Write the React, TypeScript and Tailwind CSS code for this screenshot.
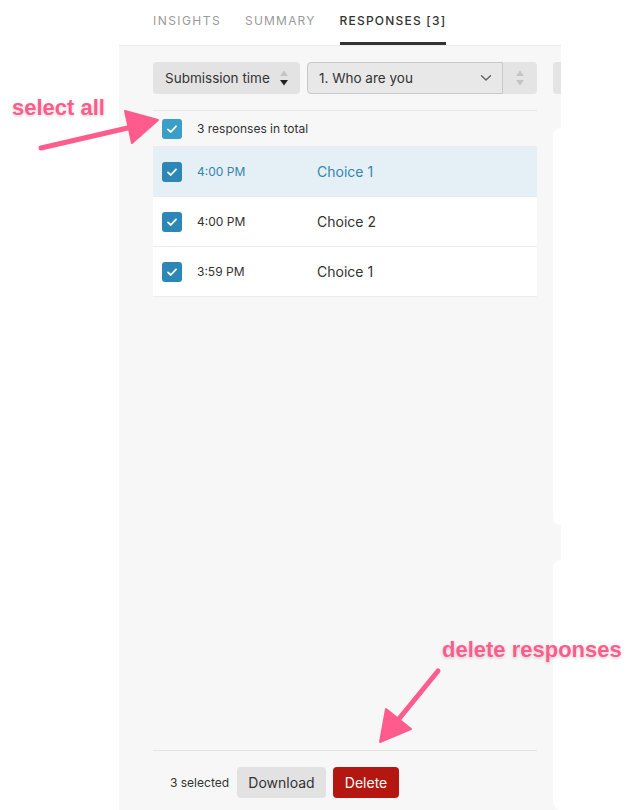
import React from 'react';

const rows = [
  { time: '4:00 PM', choice: 'Choice 1', active: true },
  { time: '4:00 PM', choice: 'Choice 2', active: false },
  { time: '3:59 PM', choice: 'Choice 1', active: false },
];

const Check = ({ light }: { light?: boolean }) => (
  <div className={`w-5 h-5 rounded-[3px] flex items-center justify-center shrink-0 ${light ? 'bg-[#3a9ec6]' : 'bg-[#2c87b6]'}`}>
    <svg width="14" height="14" viewBox="0 0 14 14" fill="none">
      <polyline points="3,7.4 5.8,10 11,4.3" stroke="white" strokeWidth="1.8" strokeLinecap="round" strokeLinejoin="round" />
    </svg>
  </div>
);

const SortArrows = ({ dark }: { dark?: boolean }) => (
  <svg width="10" height="18" viewBox="0 0 10 18">
    <polygon points="5,1.5 9,7 1,7" fill="#c4c4c4" />
    <polygon points="1,11 9,11 5,16.5" fill={dark ? '#222' : '#c4c4c4'} />
  </svg>
);

export default function App() {
  return (
    <div className="relative w-[634px] h-[810px] bg-white overflow-hidden font-['Inter',sans-serif] text-[#333]">
      {/* tabs */}
      <div className="h-[45px] pl-[153px] flex items-end gap-[24px] text-[12px] tracking-[0.1em]">
        <div className="pb-[15px] text-[#9a9a9a] tracking-[0.12em]">INSIGHTS</div>
        <div className="pb-[15px] text-[#9a9a9a]">SUMMARY</div>
        <div className="pb-[12px] border-b-[3px] border-[#333] text-[#333] font-medium">RESPONSES [3]</div>
      </div>

      {/* panel */}
      <div className="ml-[119px] w-[442px] h-[765px] bg-[#f7f7f7] border-t border-[#ececec] pl-[34px] pt-[16px] flex gap-4 overflow-hidden">
        {/* list column */}
        <div className="w-[384px] shrink-0 flex flex-col">
          <div className="h-8 flex gap-[7px]">
            <div className="w-[147px] rounded-[4px] bg-[#e3e3e3] flex items-center justify-between pl-3 pr-[11px] text-[13.5px]">
              <span>Submission time</span>
              <SortArrows dark />
            </div>
            <div className="flex">
              <div className="w-[196px] rounded-l-[4px] bg-[#e8e8e8] border border-[#c8c8c8] flex items-center justify-between pl-[11px] pr-[10px] text-[13.5px]">
                <span>1. Who are you</span>
                <svg width="12" height="8" viewBox="0 0 12 8" fill="none">
                  <polyline points="1.5,1.8 6,6 10.5,1.8" stroke="#666" strokeWidth="1.5" strokeLinecap="round" strokeLinejoin="round" />
                </svg>
              </div>
              <div className="w-[34px] rounded-r-[4px] bg-[#e4e4e4] flex items-center justify-center">
                <SortArrows />
              </div>
            </div>
          </div>

          <div className="mt-4 border-t border-[#e6e6e6]">
            <div className="h-[36px] flex items-center pl-[9px] gap-[15px] text-[12px] border-b border-[#ececec]">
              <Check light />
              <span>3 responses in total</span>
            </div>
            {rows.map((r, i) => (
              <div
                key={i}
                className={`h-[50px] flex items-center pl-[9px] border-b border-[#ececec] ${r.active ? 'bg-[#e5f0f6] text-[#3585ad]' : 'bg-white text-[#333]'}`}
              >
                <Check />
                <span className="ml-[15px] w-[120px] text-[12px]">{r.time}</span>
                <span className="text-[14px]">{r.choice}</span>
              </div>
            ))}
          </div>

          <div className="mt-auto mb-[12px] border-t border-[#e4e4e4] pt-[16px] pl-[17px] flex items-center gap-[7px]">
            <span className="text-[12px] mr-[1px]">3 selected</span>
            <button className="w-[89px] h-[31px] rounded-[4px] bg-[#e2e2e2] text-[14px] text-[#333]">Download</button>
            <button className="w-[66px] h-[31px] rounded-[4px] bg-[#b3170f] text-[14px] text-white">Delete</button>
          </div>
        </div>

        {/* right column (cut off) */}
        <div className="w-[100px] shrink-0 flex flex-col">
          <div className="h-8 rounded-[4px] bg-[#e4e4e4]" />
          <div className="mt-[34px] h-[397px] rounded-[8px] bg-white" />
          <div className="mt-[35px] flex-1 rounded-[8px] bg-white" />
        </div>
      </div>

      {/* annotations */}
      <div className="absolute left-[12px] top-[91px] text-[22px] font-bold text-[#ff5b8c] font-['Liberation_Sans',sans-serif] [text-shadow:0_0_2px_#fff,0_1px_3px_rgba(0,0,0,0.25)]">
        select all
      </div>
      <div className="absolute left-[442px] top-[633px] text-[22px] font-bold text-[#ff5b8c] font-['Liberation_Sans',sans-serif] [text-shadow:0_0_2px_#fff,0_1px_3px_rgba(0,0,0,0.25)]">
        delete responses
      </div>
      <svg className="absolute inset-0 pointer-events-none" width="634" height="810">
        <g fill="#ff5b8c" stroke="#ff5b8c" strokeLinejoin="round">
          <line x1="41" y1="148" x2="132" y2="127" strokeWidth="5" strokeLinecap="round" />
          <polygon points="158,120 132,143 125,111" strokeWidth="2" />
          <line x1="438" y1="671" x2="398" y2="720" strokeWidth="5" strokeLinecap="round" />
          <polygon points="380,742 411,729 386,709" strokeWidth="2" />
        </g>
      </svg>
    </div>
  );
}
